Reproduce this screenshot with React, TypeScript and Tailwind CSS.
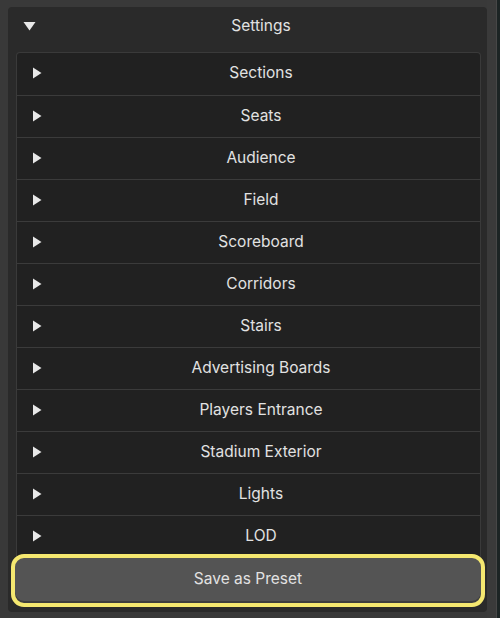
import React from "react";

const items = [
  "Sections",
  "Seats",
  "Audience",
  "Field",
  "Scoreboard",
  "Corridors",
  "Stairs",
  "Advertising Boards",
  "Players Entrance",
  "Stadium Exterior",
  "Lights",
  "LOD",
];

function RightTri() {
  return (
    <svg width="10" height="12" viewBox="0 0 10 12" className="shrink-0">
      <path d="M1 0.5 L9.5 6 L1 11.5 Z" fill="#e8e8e8" />
    </svg>
  );
}

function DownTri() {
  return (
    <svg width="13" height="10" viewBox="0 0 13 10" className="shrink-0">
      <path d="M0.5 1 L12.5 1 L6.5 9.5 Z" fill="#e8e8e8" />
    </svg>
  );
}

export default function App() {
  return (
    <div
      className="w-[500px] h-[618px] bg-[#393939] flex overflow-hidden"
      style={{ fontFamily: "Inter, 'Noto Sans', sans-serif" }}
    >
      <div className="w-[487px] pl-2 pt-[7px]">
        <div className="w-[479px] h-[605px] rounded-[4px] bg-[#2a2a2a] flex flex-col">
          <div className="h-[45px] flex items-center pl-[15px] pb-[7px] shrink-0">
            <DownTri />
            <div className="flex-1 text-center text-[15.5px] text-[#e2e2e2] pr-[1px]">Settings</div>
          </div>
          <div className="ml-2 mr-[6px] rounded-t-[4px] border border-b-0 border-[#3a3a3a] bg-[#212121] flex flex-col">
            {items.map((name, i) => (
              <div
                key={name}
                className={
                  "h-[42px] flex items-center pl-[15px] pb-[1px] " +
                  (i === 0 ? "pb-[3px]" : "border-t border-[#3b3b3b]")
                }
              >
                <RightTri />
                <div className="flex-1 text-center text-[15.5px] text-[#e2e2e2]">{name}</div>
              </div>
            ))}
          </div>
          <div className="ml-[3px] w-[474px] -mt-[3px] h-[53px] rounded-[13px] border-[4px] border-[#f5e870] bg-[#545454] flex items-center justify-center pb-[4px] shadow-[inset_0_-2px_0_#3e3e3e] shrink-0">
            <span className="text-[15.5px] text-[#e2e2e2]">Save as Preset</span>
          </div>
        </div>
      </div>
      <div className="flex-1 flex">
        <div className="w-[9px] bg-[#3a3a3a]" />
        <div className="w-[1px] bg-[#474747]" />
        <div className="flex-1 bg-[#1c2424]" />
      </div>
    </div>
  );
}
